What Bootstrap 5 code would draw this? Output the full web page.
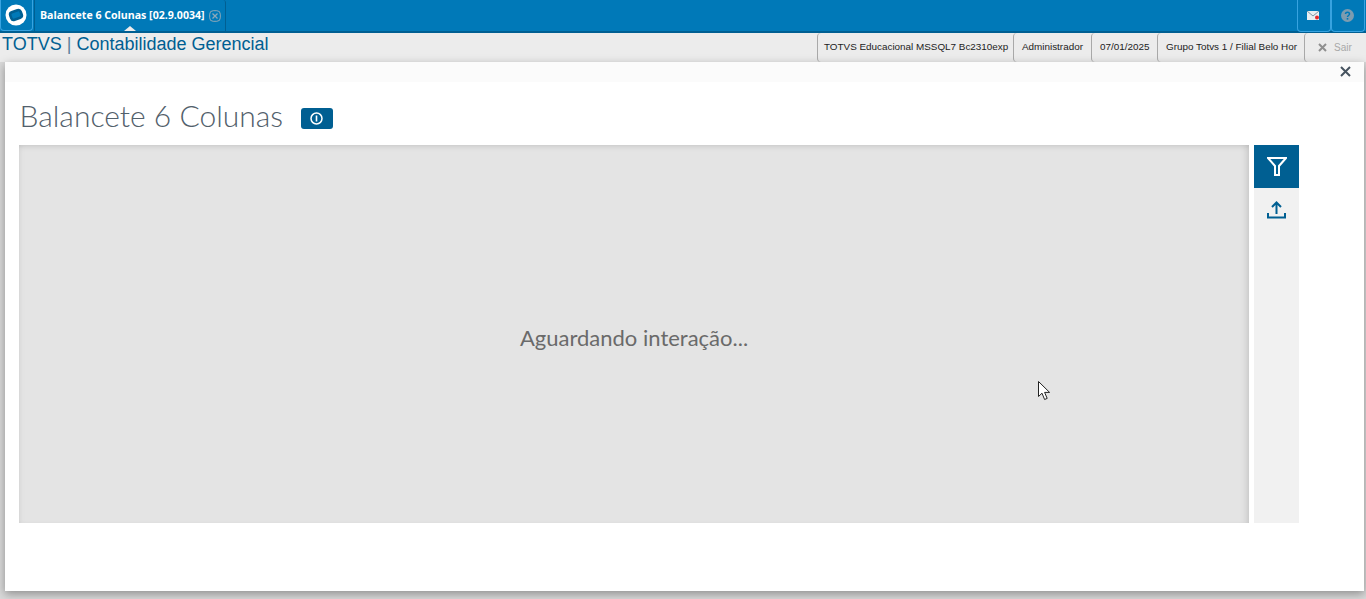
<!DOCTYPE html>
<html lang="pt-BR">
<head>
<meta charset="utf-8">
<title>Balancete 6 Colunas</title>
<link href="https://cdn.jsdelivr.net/npm/bootstrap@5.3.0/dist/css/bootstrap.min.css" rel="stylesheet">
<style>
html,body{height:599px;overflow:hidden;background:#d9d9d9;font-family:"Liberation Sans",Arial,sans-serif}
.topbar{height:33px;background:#0079b8;border-bottom:2px solid #005f92}
.logo-btn{width:33px;height:31px;padding-right:1px;border:1px solid #38a3e0;border-top:0;border-radius:0 0 4px 4px}
.app-tab{position:relative;width:192px;height:31px;margin-left:1px;border:1px solid #005f92;border-top:0;border-bottom:0;border-radius:0 3px 0 0;padding:0 0 0 5px;color:#fff;font-weight:700;font-family:"Open Sans","Liberation Sans",sans-serif;font-size:10.6px;white-space:nowrap}
.tab-caret{position:absolute;left:89px;bottom:0;width:0;height:0;border-left:6px solid transparent;border-right:6px solid transparent;border-bottom:5px solid #ececec}
.top-btn{width:34px;height:32px;padding-right:1px;border:1px solid #38a3e0;border-top:0;border-radius:0 0 4px 4px}
.subbar{height:29px;background:#ececec}
.app-name{color:#005f92;font-size:18px;line-height:23px;padding-left:2px}
.app-name span{color:#5a7f9c}
.info-cell{height:29px;border-left:1px solid #a9a9a9;border-radius:4px 0 0 4px;font-size:9.9px;color:#222;white-space:nowrap}
.cell-db{width:196px;padding-left:6px}
.cell-user{width:78px;padding-left:8px}
.cell-date{width:66px;padding-left:8px}
.cell-org{width:147px;padding-left:8px}
.exit-cell{width:62px;padding-left:13px;gap:7px;color:#a8a8a8;font-size:10px}
.sheet{height:529px;margin:0 2px 0 5px;background:#fff;box-shadow:0 3px 9px rgba(0,0,0,.35);position:relative}
.sheet-head{height:20px;background:#fbfbfb}
.close-x{position:absolute;right:13px;top:4px;line-height:0}
.page-head{height:63px;padding-left:14.5px}
.page-title{font-family:Lato,"Open Sans",sans-serif;font-weight:300;font-size:30px;color:#52606b;margin:0;line-height:36px;padding-top:15px}
.info-badge{width:32px;height:21px;margin-left:17.5px;margin-top:26px;background:#005f92;border-radius:3px}
.work-row{height:378px;padding-left:14px;gap:5px}
.wait-panel{width:1230px;background:#e4e4e4;box-shadow:inset 0 4px 6px -3px rgba(0,0,0,.12),inset -6px 0 6px -3px rgba(0,0,0,.1),inset 5px 0 6px -4px rgba(0,0,0,.05);font-family:Lato,"Open Sans",sans-serif;font-size:22px;color:#6a6a6a;padding-top:6px;position:relative}
.side-rail{width:45px;background:#f1f1f1}
.rail-btn{height:43px}
.rail-on{background:#005f92}
.cursor-mark{position:absolute;left:1019px;top:236px;line-height:0}
</style>
</head>
<body>
<header class="topbar d-flex justify-content-between">
  <div class="d-flex">
    <div class="logo-btn d-flex align-items-center justify-content-center">
      <svg width="22" height="22" viewBox="0 0 22 22"><circle cx="11" cy="11" r="10.500" fill="#fff"/><rect x="5.500" y="7" width="11" height="8" rx="2.500" transform="rotate(-20 11 11)" fill="#0079b8" stroke="#005f92" stroke-width="2.600"/></svg>
    </div>
    <div class="app-tab d-flex align-items-center gap-1">
      <span>Balancete 6 Colunas [02.9.0034]</span>
      <svg width="12" height="12" viewBox="0 0 12 12"><rect x=".7" y=".7" width="10.600" height="10.600" rx="3.500" fill="none" stroke="#8fa9b8"/><path d="M3.500 3.500l5 5M8.500 3.500l-5 5" stroke="#8fa9b8" stroke-width="1.300"/></svg>
      <i class="tab-caret"></i>
    </div>
  </div>
  <div class="d-flex">
    <div class="top-btn d-flex align-items-center justify-content-center">
      <svg width="13" height="10" viewBox="0 0 13 10"><rect width="12" height="9" fill="#e8eef2"/><path d="M0 0l6 5 6-5" fill="none" stroke="#7d96a6"/><circle cx="10" cy="6.500" r="2" fill="#e8262a"/></svg>
    </div>
    <div class="top-btn d-flex align-items-center justify-content-center">
      <svg width="13" height="13" viewBox="0 0 13 13"><circle cx="6.500" cy="6.500" r="6.500" fill="#7d9cb0"/><path d="M4.500 5c0-2.500 4-2.500 4 0 0 1.500-2 1.500-2 3" fill="none" stroke="#0079b8" stroke-width="1.500"/><rect x="5.700" y="9" width="1.600" height="1.600" fill="#0079b8"/></svg>
    </div>
    <div style="width:1px"></div>
  </div>
</header>
<div class="subbar d-flex justify-content-between">
  <div class="app-name">TOTVS <span>|</span> Contabilidade Gerencial</div>
  <div class="d-flex">
    <div class="info-cell cell-db d-flex align-items-center">TOTVS Educacional MSSQL7 Bc2310exp</div>
    <div class="info-cell cell-user d-flex align-items-center">Administrador</div>
    <div class="info-cell cell-date d-flex align-items-center">07/01/2025</div>
    <div class="info-cell cell-org d-flex align-items-center">Grupo Totvs 1 / Filial Belo Hor</div>
    <div class="info-cell exit-cell d-flex align-items-center">
      <svg width="9" height="9" viewBox="0 0 9 9"><path d="M1 1l7 7M8 1l-7 7" stroke="#8f8f8f" stroke-width="2"/></svg><span>Sair</span>
    </div>
  </div>
</div>
<main class="sheet">
  <div class="sheet-head"></div>
  <span class="close-x"><svg width="11" height="11" viewBox="0 0 11 11"><path d="M1 1l9 9M10 1l-9 9" stroke="#46535f" stroke-width="2"/></svg></span>
  <div class="page-head d-flex align-items-start">
    <h1 class="page-title">Balancete 6 Colunas</h1>
    <div class="info-badge d-flex align-items-center justify-content-center">
      <svg width="13" height="13" viewBox="0 0 13 13"><circle cx="6.500" cy="6.500" r="5.500" fill="none" stroke="#fff" stroke-width="1.500"/><rect x="5.700" y="3.500" width="1.600" height="6" fill="#fff"/></svg>
    </div>
  </div>
  <div class="work-row d-flex">
    <section class="wait-panel d-flex align-items-center justify-content-center">
      Aguardando interação...
      <span class="cursor-mark"><svg width="13" height="20" viewBox="0 0 13 20"><path d="M.5.500v15l3.500-3.300 2.600 6.300 2.600-1.100-2.600-6h5z" fill="#fff" stroke="#222"/></svg></span>
    </section>
    <aside class="side-rail">
      <div class="rail-btn rail-on d-flex align-items-center justify-content-center">
        <svg width="20" height="19" viewBox="0 0 20 19"><path d="M1 1h18l-7 8v9H8V9z" fill="none" stroke="#fff" stroke-width="2"/></svg>
      </div>
      <div class="rail-btn d-flex align-items-center justify-content-center">
        <svg width="19" height="18" viewBox="0 0 19 18"><path d="M9.500 13V2M5 6l4.500-4.500L14 6M1 12v4.500h17V12" fill="none" stroke="#005f92" stroke-width="2"/></svg>
      </div>
    </aside>
  </div>
</main>
</body>
</html>
